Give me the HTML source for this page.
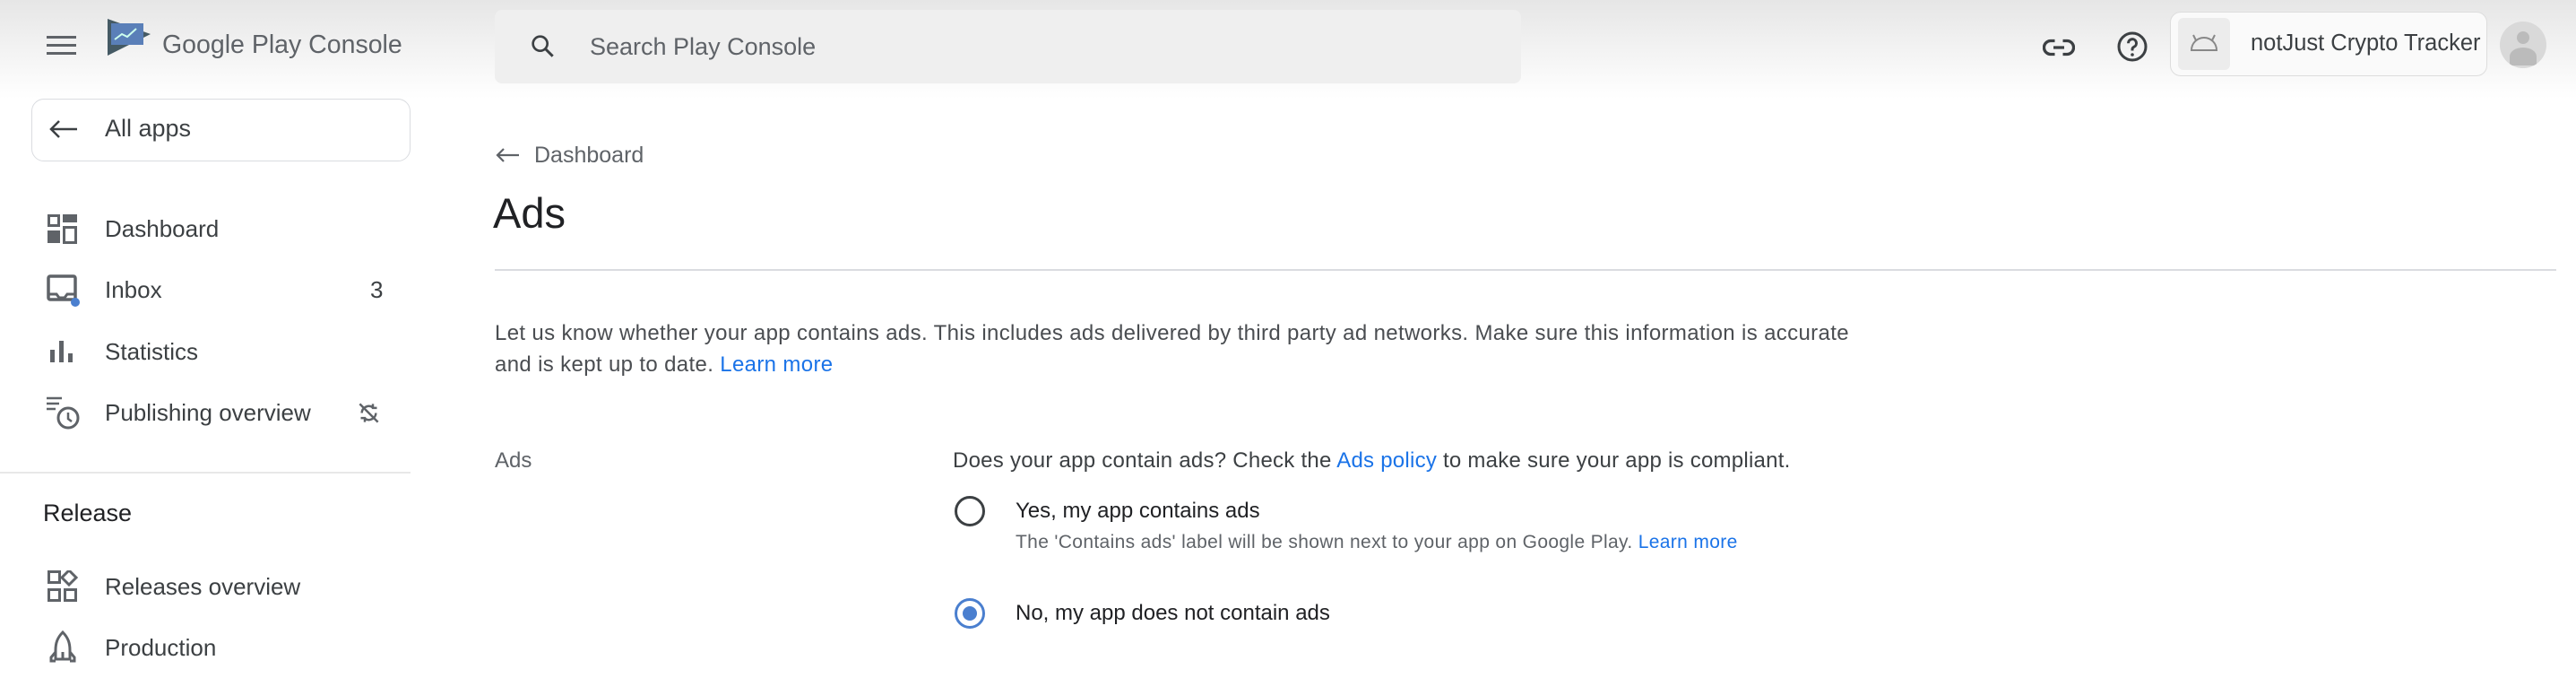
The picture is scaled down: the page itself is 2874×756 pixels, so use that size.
<!DOCTYPE html>
<html><head><meta charset="utf-8"><style>
*{margin:0;padding:0;box-sizing:border-box}
body{width:2874px;height:756px;overflow:hidden;background:#fff;font-family:"Liberation Sans",Arial,sans-serif;color:#3c4043;position:relative}
.a{position:absolute;white-space:nowrap}
.hdr{position:absolute;left:0;top:0;width:2874px;height:110px;background:linear-gradient(#e6e6e6,#fff)}
.nav{font-size:26px;color:#3c4043;line-height:30px}
.ic{position:absolute}
a{color:#1a73e8;text-decoration:none}
</style></head><body>
<div class="hdr"></div>
<svg class="ic" style="left:52px;top:38px" width="36" height="26" viewBox="0 0 36 26"><rect y="2" width="33" height="3" fill="#5f6368"/><rect y="11" width="33" height="3" fill="#5f6368"/><rect y="20" width="33" height="3" fill="#5f6368"/></svg>
<svg class="ic" style="left:119px;top:20px" width="50" height="44" viewBox="0 0 50 44"><path d="M1 1 L49 18 L1 42 Z" fill="#455a64"/><rect x="5" y="6" width="36" height="24" fill="#5a7fb8"/><path d="M9 24 L17 18 L23 21 L33 12" stroke="#cfe" stroke-width="2" fill="none"/></svg>
<div class="a" style="left:181px;top:32px;font-size:28.5px;color:#5f6368;line-height:36px">Google Play Console</div>
<div class="a" style="left:552px;top:11px;width:1145px;height:82px;background:#efefef;border-radius:8px"></div>
<svg class="ic" style="left:590px;top:36px" width="32" height="32" viewBox="0 0 24 24"><circle cx="9.5" cy="9.5" r="6" stroke="#3c4043" stroke-width="2" fill="none"/><path d="M14 14 L20 20" stroke="#3c4043" stroke-width="2.2"/></svg>
<div class="a" style="left:658px;top:36px;font-size:27px;color:#5f6368;line-height:32px">Search Play Console</div>
<svg class="ic" style="left:2279px;top:38px" width="36" height="30" viewBox="0 0 24 20"><path d="M9 5H6a5 5 0 0 0 0 10h3M15 5h3a5 5 0 0 1 0 10h-3M8 10h8" stroke="#3c4043" stroke-width="2.2" fill="none"/></svg>
<svg class="ic" style="left:2361px;top:34px" width="36" height="36" viewBox="0 0 24 24"><circle cx="12" cy="12" r="10" stroke="#3c4043" stroke-width="2" fill="none"/><path d="M9 9.5a3 3 0 1 1 4.2 2.7c-.8.4-1.2 1-1.2 1.8V15" stroke="#3c4043" stroke-width="2" fill="none"/><circle cx="12" cy="18" r="1.2" fill="#3c4043"/></svg>
<div class="a" style="left:2421px;top:13px;width:354px;height:72px;border:1.5px solid #ddd;border-radius:12px;background:#fafafa"></div>
<div class="a" style="left:2430px;top:20px;width:58px;height:58px;background:#ececec;border-radius:6px"></div>
<svg class="ic" style="left:2442px;top:36px" width="34" height="22" viewBox="0 0 34 22"><path d="M3 20a14 14 0 0 1 28 0Z" stroke="#888" stroke-width="2" fill="none"/><path d="M8 9L5 3M26 9l3-6" stroke="#888" stroke-width="2"/></svg>
<div class="a" style="left:2511px;top:33px;font-size:25.5px;color:#3c4043;line-height:30px">notJust Crypto Tracker</div>
<div class="a" style="left:2789px;top:24px;width:52px;height:52px;border-radius:50%;background:#d9d9d9;overflow:hidden"><div style="position:absolute;left:19px;top:11px;width:14px;height:14px;border-radius:50%;background:#bbb"></div><div style="position:absolute;left:11px;top:29px;width:30px;height:20px;border-radius:50% 50% 0 0;background:#bbb"></div></div>
<div class="a" style="left:35px;top:110px;width:423px;height:70px;border:1.5px solid #dadce0;border-radius:14px"></div>
<svg class="ic" style="left:53px;top:132px" width="36" height="24" viewBox="0 0 36 24"><path d="M33 12H4M13 3L4 12L13 21" stroke="#3c4043" stroke-width="2.5" fill="none"/></svg>
<div class="a nav" style="left:117px;top:128px;font-size:27px">All apps</div>
<svg class="ic" style="left:53px;top:239px" width="33" height="33" viewBox="0 0 33 33"><rect x="1.5" y="1.5" width="11" height="11" stroke="#5f6368" stroke-width="3" fill="none"/><rect x="17" y="0" width="16" height="9" fill="#5f6368"/><rect x="0" y="18" width="14" height="14" fill="#5f6368"/><rect x="18.5" y="14.5" width="13" height="17" stroke="#5f6368" stroke-width="3" fill="none"/></svg>
<div class="a nav" style="left:117px;top:240px">Dashboard</div>
<svg class="ic" style="left:52px;top:306px" width="40" height="40" viewBox="0 0 40 40"><rect x="2" y="2" width="30" height="26" rx="2" stroke="#5f6368" stroke-width="3.5" fill="none"/><path d="M2 22h9l3 4h6l3-4h9" stroke="#5f6368" stroke-width="3" fill="none"/><circle cx="32" cy="31" r="5" fill="#4a7fcf"/></svg>
<div class="a nav" style="left:117px;top:308px">Inbox</div>
<div class="a nav" style="left:413px;top:308px">3</div>
<svg class="ic" style="left:56px;top:380px" width="26" height="24" viewBox="0 0 26 24"><rect x="0" y="10" width="5" height="14" fill="#5f6368"/><rect x="10" y="0" width="5" height="24" fill="#5f6368"/><rect x="20" y="14" width="5" height="10" fill="#5f6368"/></svg>
<div class="a nav" style="left:117px;top:377px">Statistics</div>
<svg class="ic" style="left:52px;top:441px" width="40" height="40" viewBox="0 0 40 40"><path d="M0 3h17M0 9h14M0 15h10" stroke="#5f6368" stroke-width="2.5"/><circle cx="24" cy="25" r="11" stroke="#5f6368" stroke-width="3" fill="none"/><path d="M24 19v7l4 3" stroke="#5f6368" stroke-width="2.5" fill="none"/></svg>
<div class="a nav" style="left:117px;top:445px">Publishing overview</div>
<svg class="ic" style="left:398px;top:447px" width="27" height="27" viewBox="0 0 24 24"><path d="M3 3L21 21M5 12a7 7 0 0 1 11-5.5M19 12a7 7 0 0 1-11 5.5M16 3v4h4M8 21v-4H4" stroke="#5f6368" stroke-width="2.2" fill="none"/></svg>
<div class="a" style="left:0;top:526px;width:458px;height:1.5px;background:#e8e8e8"></div>
<div class="a" style="left:48px;top:557px;font-size:27px;color:#202124;line-height:30px">Release</div>
<svg class="ic" style="left:53px;top:636px" width="34" height="36" viewBox="0 0 34 36"><rect x="1.5" y="1.5" width="12" height="12" stroke="#5f6368" stroke-width="3" fill="none"/><path d="M24 0L32 8L24 16L16 8Z" stroke="#5f6368" stroke-width="3" fill="none"/><rect x="1.5" y="21.5" width="12" height="12" stroke="#5f6368" stroke-width="3" fill="none"/><rect x="19.5" y="21.5" width="12" height="12" stroke="#5f6368" stroke-width="3" fill="none"/></svg>
<div class="a nav" style="left:117px;top:639px">Releases overview</div>
<svg class="ic" style="left:55px;top:703px" width="30" height="36" viewBox="0 0 30 36"><path d="M15 2C9 8 7 14 7 22v10h16V22c0-8-2-14-8-20Z M7 24L2 30v4h5M23 24l5 6v4h-5M15 24v8" stroke="#5f6368" stroke-width="3" fill="none"/></svg>
<div class="a nav" style="left:117px;top:707px">Production</div>
<svg class="ic" style="left:552px;top:163px" width="28" height="20" viewBox="0 0 28 20"><path d="M27 10H3M10 3L3 10L10 17" stroke="#5f6368" stroke-width="2.2" fill="none"/></svg>
<div class="a" style="left:596px;top:158px;font-size:25px;color:#5f6368;line-height:30px">Dashboard</div>
<div class="a" style="left:550px;top:210px;font-size:47px;color:#202124;line-height:56px">Ads</div>
<div class="a" style="left:552px;top:300px;width:2300px;height:1.5px;background:#dadce0"></div>
<div class="a" style="left:552px;top:354px;font-size:24px;letter-spacing:0.35px;color:#4a4d51;line-height:35px">Let us know whether your app contains ads. This includes ads delivered by third party ad networks. Make sure this information is accurate<br>and is kept up to date. <a>Learn more</a></div>
<div class="a" style="left:552px;top:499px;font-size:24px;color:#5f6368;line-height:30px">Ads</div>
<div class="a" style="left:1063px;top:499px;font-size:24px;letter-spacing:0.25px;color:#3c4043;line-height:30px">Does your app contain ads? Check the <a>Ads policy</a> to make sure your app is compliant.</div>
<div class="a" style="left:1065px;top:553px;width:34px;height:34px;border:3px solid #3c4043;border-radius:50%"></div>
<div class="a" style="left:1133px;top:555px;font-size:24px;color:#202124;line-height:30px">Yes, my app contains ads</div>
<div class="a" style="left:1133px;top:593px;font-size:21px;letter-spacing:0.35px;color:#5f6368;line-height:24px">The 'Contains ads' label will be shown next to your app on Google Play. <a>Learn more</a></div>
<div class="a" style="left:1065px;top:667px;width:34px;height:34px;border:3px solid #4a7fcf;border-radius:50%"><div style="position:absolute;left:6px;top:6px;width:16px;height:16px;border-radius:50%;background:#4a7fcf"></div></div>
<div class="a" style="left:1133px;top:669px;font-size:24px;color:#202124;line-height:30px">No, my app does not contain ads</div>
</body></html>
